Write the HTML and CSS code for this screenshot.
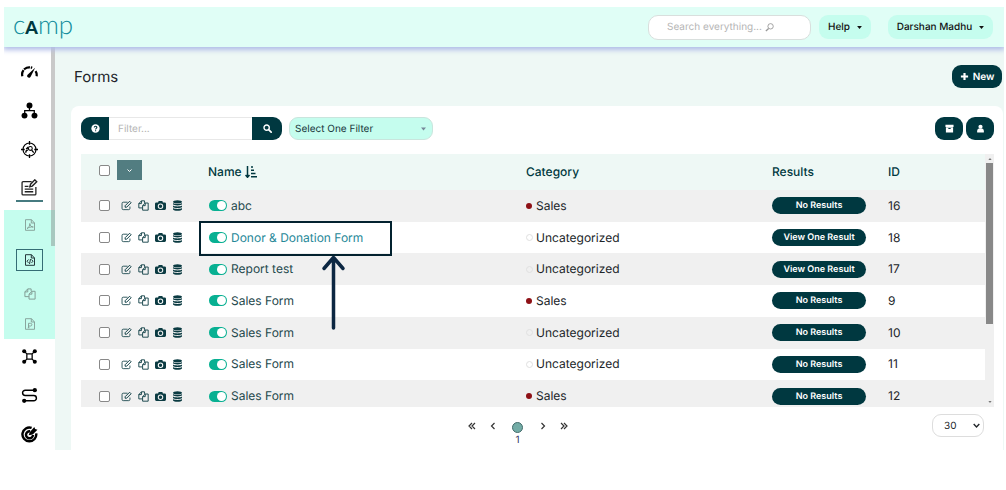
FILE: index.html
```html
<!DOCTYPE html>
<html lang="en">
<head>
<meta charset="utf-8">
<title>Forms</title>
<link rel="stylesheet" href="styles.css">
</head>
<body>
<svg class="sprite" aria-hidden="true">
  <symbol id="edit" viewBox="0 0 16 16"><path d="M13 9.500v2.700a1.800 1.800 0 0 1-1.800 1.800H3.300a1.800 1.800 0 0 1-1.800-1.800V5a1.800 1.800 0 0 1 1.800-1.800H9.500" fill="none" stroke="currentColor" stroke-width="1.200"/><path d="M6 10.500V8.300l6.500-6.500 2.200 2.200-6.500 6.500z" fill="none" stroke="currentColor" stroke-width="1.400"/></symbol>
  <symbol id="copy" viewBox="0 0 16 16"><path d="M6.500 11.500H1.200V5.200L5 1.200h4.500v3M5 1.200v4H1.200M6.700 8.200l3.800-3.800h4.300v10.400H6.700zM10.500 4.400v3.800H6.700" fill="none" stroke="currentColor" stroke-width="1.300" stroke-linejoin="round"/></symbol>
  <symbol id="camera" viewBox="0 0 16 16"><path fill-rule="evenodd" fill="currentColor" d="M2 3.500h2.500L5.300 1.500h5.400l.8 2H14a2 2 0 0 1 2 2v7a2 2 0 0 1-2 2H2a2 2 0 0 1-2-2v-7a2 2 0 0 1 2-2zM8 5a4 4 0 1 0 0 8 4 4 0 0 0 0-8zm0 1.500a2.500 2.500 0 1 1 0 5 2.500 2.500 0 0 1 0-5z"/></symbol>
  <symbol id="database" viewBox="0 0 16 16"><g fill="currentColor"><ellipse cx="8" cy="2.500" rx="6.500" ry="2.300"/><path d="M1.500 4.200c2 1.800 11 1.800 13 0v2c-1 2.200-12 2.200-13 0zM1.500 8c2 1.800 11 1.800 13 0v2c-1 2.200-12 2.200-13 0zM1.500 11.800c2 1.800 11 1.800 13 0v2c-1 2.400-12 2.400-13 0z"/></g></symbol>
  <symbol id="search" viewBox="0 0 16 16"><circle cx="6.500" cy="6.500" r="4.700" fill="none" stroke="currentColor" stroke-width="2.500"/><path d="M10 10l4.500 4.500" stroke="currentColor" stroke-width="3" stroke-linecap="round"/></symbol>
  <symbol id="caret" viewBox="0 0 8 5"><path d="M0 0h8L4 5z" fill="currentColor"/></symbol>
  <symbol id="chevron" viewBox="0 0 10 6"><path d="M1 1l4 4 4-4" fill="none" stroke="currentColor" stroke-width="2"/></symbol>
</svg>

<div class="app">
  <header class="topbar">
    <a class="logo" href="#" aria-label="camp">c<b>A</b>mp</a>
    <div class="topbar-tools">
      <label class="search">
        <input type="text" placeholder="Search everything..." aria-label="Search everything">
        <svg viewBox="0 0 10 10"><circle cx="6.200" cy="3.700" r="3" fill="none" stroke="currentColor"/><path d="M4 6L1 9" stroke="currentColor" stroke-width="1.500"/></svg>
      </label>
      <button class="pill help">Help <svg><use href="#caret"/></svg></button>
      <button class="pill user">Darshan Madhu <svg><use href="#caret"/></svg></button>
    </div>
  </header>

  <div class="body">
    <nav class="sidebar" aria-label="Main">
      <div class="menu">
        <a class="item" href="#" aria-label="Dashboard"><svg viewBox="0 0 16 16"><path d="M1.300 12.500A6.700 6.700 0 0 1 10.500 4.600M14.700 12.500a7 7 0 0 0-1-4.800" fill="none" stroke="currentColor" stroke-width="2.100" stroke-dasharray="6 .8"/><path d="M13.300 4.500L9.300 12.500a1.800 1.800 0 1 1-2.600-2z" fill="currentColor"/></svg></a>
        <a class="item" href="#" aria-label="Contacts"><svg viewBox="0 0 16 16"><path d="M8 4v4M3.500 12V8.200h9V12" fill="none" stroke="currentColor" stroke-width="1.200"/><g fill="currentColor"><circle cx="8" cy="3.300" r="2.800"/><circle cx="3.300" cy="12.800" r="2.800"/><circle cx="12.700" cy="12.800" r="2.800"/></g></svg></a>
        <a class="item" href="#" aria-label="Audience"><svg viewBox="0 0 16 16"><circle cx="8" cy="8" r="6.100" fill="none" stroke="currentColor" stroke-width="1.100"/><path d="M8 0v3.500M8 12.500V16M0 8h3.500M12.500 8H16M4.500 11c0-2 1-2.500 2-2.500M10 8.500l2 2.500M4.800 7.500l1.500-1.300L7 8" fill="none" stroke="currentColor" stroke-width="1.200"/><circle cx="8.800" cy="7" r="1.800" fill="none" stroke="currentColor"/></svg></a>
        <a class="item current" href="#" aria-label="Content"><svg viewBox="0 0 16 16"><path d="M10 2.500H2a1 1 0 0 0-1 1V14a1 1 0 0 0 1 1h11a1 1 0 0 0 1-1V7.500M3.500 7H7M3.500 9.500h8M3.500 12h8" fill="none" stroke="currentColor" stroke-width="1.200"/><path d="M8.300 7.300l.7-2.400L13 .8l1.800 1.800-4.200 4.100z" fill="none" stroke="currentColor" stroke-width="1.300"/></svg></a>
      </div>
      <div class="submenu">
        <a class="sub" href="#" aria-label="PDF"><svg viewBox="0 0 12 12"><path d="M1.500.7h6L10.500 4v7.300h-9zM7.300.7V4h3.200M3 9.500c2-1 2.800-3 2.800-5 .5 2.500 1.500 3.500 3.500 3.500-2.500-.2-4.500.3-6.300 1.500z" fill="none" stroke="currentColor" stroke-width=".9"/></svg></a>
        <a class="sub chosen" href="#" aria-label="Forms"><svg viewBox="0 0 12 12"><path d="M1.500.7h6L10.500 4v7.300h-9zM7.300.7V4h3.200M4.500 5.500L3 7.200l1.500 1.700M7.500 5.500L9 7.200 7.500 8.900M6.500 5l-1 5" fill="none" stroke="currentColor"/></svg></a>
        <a class="sub" href="#" aria-label="Pages"><svg><use href="#copy"/></svg></a>
        <a class="sub" href="#" aria-label="Presentations"><svg viewBox="0 0 12 12"><path d="M1.500.7h6L10.500 4v7.300h-9zM7.300.7V4h3.200M4.500 9.800V5.300h2a1.300 1.300 0 0 1 0 2.700h-2M3.800 9.800h1.700" fill="none" stroke="currentColor" stroke-width=".9"/></svg></a>
      </div>
      <div class="menu lower">
        <a class="item" href="#" aria-label="Integrations"><svg viewBox="0 0 16 16"><path d="M3 3l3 3M13 3l-3 3M3 13l3-3M13 13l-3-3M5.500 5.500h5v5h-5z" fill="none" stroke="currentColor" stroke-width="1.200"/><g fill="currentColor"><circle cx="3" cy="3" r="1.900"/><circle cx="13" cy="3" r="1.900"/><circle cx="3" cy="13" r="1.900"/><circle cx="13" cy="13" r="1.900"/></g></svg></a>
        <a class="item" href="#" aria-label="Journeys"><svg viewBox="0 0 16 16"><path d="M13 3H4a2.500 2.500 0 0 0 0 5h8a2.500 2.500 0 0 1 0 5H3" fill="none" stroke="currentColor" stroke-width="1.400"/><circle cx="13" cy="3" r="2" fill="currentColor"/><circle cx="3" cy="13" r="2" fill="currentColor"/></svg></a>
        <a class="item" href="#" aria-label="Goals"><svg viewBox="0 0 16 16"><path d="M10 1.800A6.500 6.500 0 1 0 14.300 7M8.500 5A3.300 3.300 0 1 0 11.300 8.500" fill="none" stroke="currentColor" stroke-width="2.300"/><path d="M7.200 8.800l1-3L12.500 1l.8 1.800 2.200.7L11 8z" fill="currentColor"/></svg></a>
      </div>
      <span class="side-scroll"></span>
    </nav>

    <main class="main">
      <div class="heading">
        <h1>Forms</h1>
        <button class="dark new"><svg viewBox="0 0 10 10"><path d="M5 1v8M1 5h8" stroke="currentColor" stroke-width="2.400"/></svg>New</button>
      </div>

      <section class="card">
        <div class="toolbar">
          <div class="filter">
            <button class="dark left" aria-label="Filter help"><svg viewBox="0 0 10 10"><circle cx="5" cy="5" r="4.600" fill="currentColor"/><path d="M3.600 3.800c.1-1.900 3-1.700 2.900 0C6.400 4.900 5.100 4.800 5.100 6M5.100 6.900v1.200" fill="none" stroke="#003840" stroke-width="1.200"/></svg></button>
            <input type="text" placeholder="Filter..." aria-label="Filter">
            <button class="dark right" aria-label="Search"><svg><use href="#search"/></svg></button>
          </div>
          <div class="picker">
            <select aria-label="Saved filter"><option>Select One Filter</option></select>
            <svg><use href="#caret"/></svg>
          </div>
          <div class="tool-right">
            <button class="dark" aria-label="Archive"><svg viewBox="0 0 10 10"><path fill-rule="evenodd" fill="currentColor" d="M.5.800h9v2.400h-9zM1 3.700h8v5.800H1zM3.700 4.500v1h2.600v-1z"/></svg></button>
            <button class="dark" aria-label="Owner"><svg viewBox="0 0 10 10"><g fill="currentColor"><circle cx="5" cy="3" r="2.300"/><path d="M1.300 9.500V8c0-2 1-3 2.200-3h3c1.200 0 2.200 1 2.200 3v1.500z"/></g></svg></button>
          </div>
        </div>

        <div class="table-box">
          <div class="table-view">
            <table>
              <colgroup><col class="c-actions"><col><col class="c-category"><col class="c-results"><col class="c-id"></colgroup>
              <thead>
                <tr>
                  <th><div class="actions"><input type="checkbox" aria-label="Select all"><button class="bulk" aria-label="Bulk actions"><svg><use href="#chevron"/></svg></button></div></th>
                  <th>Name <svg class="sort" viewBox="0 0 12 12"><path d="M2.500 0v11M.5 9l2 2.300L4.500 9M6 1h2M6 4.200h3M6 7.500h4.500M6 10.800h6" fill="none" stroke="currentColor" stroke-width="1.500"/></svg></th>
                  <th>Category</th><th>Results</th><th>ID</th>
                </tr>
              </thead>
              <tbody id="rows"></tbody>
            </table>
            <svg class="callout" viewBox="0 0 193 110" aria-hidden="true"><path d="M1 1h191v33H1z" fill="none" stroke="#03222f" stroke-width="2"/><path d="M134.500 37v70M125 47.500l9.500-11 9.500 11" fill="none" stroke="#0c2742" stroke-width="3.500" stroke-linecap="round" stroke-linejoin="round"/></svg>
          </div>
          <div class="scrollbar"><svg><use href="#caret"/></svg><span></span><svg><use href="#caret"/></svg></div>
        </div>

        <div class="footer">
          <nav class="pager" aria-label="Pages">
            <a href="#" aria-label="First"><svg viewBox="0 0 8 8"><path d="M4 1L1 4l3 3M7 1L4 4l3 3" /></svg></a>
            <a href="#" aria-label="Previous"><svg viewBox="0 0 8 8"><path d="M5.500 1l-3 3 3 3"/></svg></a>
            <a class="page" href="#"><i></i>1</a>
            <a href="#" aria-label="Next"><svg viewBox="0 0 8 8"><path d="M2.500 1l3 3-3 3"/></svg></a>
            <a href="#" aria-label="Last"><svg viewBox="0 0 8 8"><path d="M1 1l3 3-3 3M4 1l3 3-3 3"/></svg></a>
          </nav>
          <div class="size">
            <select aria-label="Rows per page"><option>30</option></select>
            <svg><use href="#chevron"/></svg>
          </div>
        </div>
      </section>
    </main>
  </div>
</div>
<script src="rows.js"></script>
</body>
</html>
```
FILE: styles.css
```css
* { box-sizing: border-box; }
body { margin: 7px 2px 0 4px; background: #fff; color: #212529; font: 12px/16px Inter, "Liberation Sans", sans-serif; text-rendering: geometricPrecision; }
button, input, select { font: inherit; color: inherit; margin: 0; text-rendering: inherit; }
button { border: 0; padding: 0; cursor: pointer; }
a { color: inherit; text-decoration: none; }
svg { display: block; flex: none; }
.sprite { position: absolute; width: 0; height: 0; }

.topbar { position: relative; z-index: 1; display: flex; align-items: center; justify-content: space-between; height: 40px; padding: 0 11px 0 9px; background: #e0fef6; box-shadow: 0 2px 5px 1px #b1bee8; clip-path: inset(0 0 -10px 0); }
.logo { font: 300 26px/28px Lato, sans-serif; color: #118c9c; padding-bottom: 4px; }
.logo b { font-size: 18px; font-weight: 900; color: #003840; }
.topbar-tools { display: flex; align-items: center; }
.search { display: flex; align-items: center; width: 163px; height: 25px; padding-left: 18px; border: 1px solid #d9dfdd; border-radius: 10px; background: #fff; margin-right: 8px; color: #999; }
.search input { width: 98px; padding: 0; border: 0; outline: 0; background: none; font-size: 10px; }
.search svg { width: 9px; height: 9px; }
::placeholder { color: #b5b5b5; opacity: 1; }
.pill { display: flex; align-items: center; justify-content: center; gap: 7px; height: 24px; border-radius: 9px; background: #c5fdee; color: #111; font-size: 10px; font-weight: 500; }
.pill svg { width: 5px; height: 3px; }
.help { width: 52px; margin-right: 17px; }
.user { width: 105px; }

.body { display: flex; }
.sidebar { position: relative; flex: none; width: 51px; padding-top: 5px; }
.menu { display: flex; flex-direction: column; align-items: center; }
.item { display: flex; align-items: center; justify-content: center; width: 27px; height: 39px; color: #000; }
.item svg { width: 17px; height: 17px; }
.item.current { height: 28px; margin: 5px 0 8px; border-bottom: 2px solid #467b80; color: #222; }
.lower { gap: 22px; padding-top: 9px; }
.lower .item { height: 17px; }
.submenu { display: flex; flex-direction: column; align-items: center; gap: 8px; height: 129px; padding-top: 4px; background: #c5fdee; color: #829c94; }
.sub { display: flex; align-items: center; justify-content: center; width: 27px; height: 22px; }
.sub svg { width: 12px; height: 12px; }
.sub:nth-child(2) { margin: 5px 0 4px; }
.chosen { border: 1px solid #356d75; color: #24383b; }
.side-scroll { position: absolute; top: 0; right: 0; width: 4px; height: 199px; background: rgba(130, 130, 130, .43); }

.main { flex: 1; min-width: 0; padding: 18px 1px 0 16px; background: #eef8f5; }
.heading { display: flex; align-items: center; justify-content: space-between; padding: 0 1px 0 3px; margin-bottom: 18px; }
h1 { margin: 0; font-size: 15px; line-height: 20px; font-weight: 400; }
.dark { display: flex; align-items: center; justify-content: center; background: #003840; color: #fff; height: 23px; border-radius: 9px; }
.dark svg { width: 9px; height: 9px; }
.new { width: 50px; gap: 4px; font-size: 10px; font-weight: 600; }

.card { padding: 11px 9px 3px 10px; background: #fff; border-radius: 8px 8px 0 0; }
.toolbar { display: flex; align-items: center; margin-bottom: 14px; }
.filter { display: flex; width: 201px; margin-right: 7px; }
.filter input { flex: 1; min-width: 0; height: 23px; padding: 0 9px; border: 1px solid #e8e8e8; border-width: 1px 0; font-size: 10px; outline: 0; }
.left { width: 28px; border-radius: 9px 0 0 9px; }
.right { width: 30px; border-radius: 0 9px 9px 0; }
.picker, .size { position: relative; }
.picker svg { position: absolute; right: 7px; top: 10px; width: 5px; height: 4px; color: #789; }
select { appearance: none; outline: 0; }
.picker select { display: block; width: 144px; height: 23px; padding: 0 5px; border: 1px solid #c9e5dd; border-radius: 9px; background: #c5fdee; font-size: 10px; color: #17373b; }
.tool-right { display: flex; gap: 3px; margin-left: auto; }
.tool-right .dark { width: 28px; }

.table-box { display: flex; height: 253px; overflow: hidden; }
.table-view { position: relative; flex: 1; }
table { width: 100%; height: 258px; table-layout: fixed; border-collapse: collapse; }
.c-actions { width: 127px; }
.c-category { width: 246px; }
.c-results { width: 116px; }
.c-id { width: 97px; }
thead tr { height: 36px; background: #eef8f5; }
th, td { padding: 0; text-align: left; font-size: 12px; }
th { font-weight: 500; color: #003840; }
tbody tr:nth-child(odd) { background: #f0f0f0; }
.sort { display: inline-block; width: 12px; height: 12px; vertical-align: -2px; }
.actions { display: flex; align-items: center; gap: 6px; padding-left: 18px; color: #0b3b42; }
.actions svg { width: 11px; height: 11px; }
input[type="checkbox"] { appearance: none; flex: none; width: 11px; height: 11px; margin-right: 5px; border: 1px solid #888; border-radius: 2px; background: #fff; }
thead input[type="checkbox"] { margin-right: 1px; }
thead .actions { padding-bottom: 4px; }
.bulk { display: flex; align-items: center; justify-content: center; width: 25px; height: 20px; background: #527d81; color: #fff; }
.bulk svg { width: 5px; height: 3px; }
.name { display: flex; align-items: center; gap: 4px; color: #24484c; }
.name.link { color: #258797; }
.name .switch { width: 18px; height: 11px; margin: 0 0 0 1px; padding: 1px; border: 0; border-radius: 6px; background: #08b092; }
.switch::before { content: ""; display: block; width: 9px; height: 9px; margin-left: auto; border-radius: 50%; background: #fff; }
.category { display: flex; align-items: center; gap: 3px; }
.category i { width: 7px; height: 7px; border: 1px solid #e0e0e0; border-radius: 50%; }
.category.sales i { border: 0; width: 6px; height: 6px; margin-right: 1px; background: #8e1116; }
.result { width: 94px; height: 17px; border-radius: 9px; background: #003840; color: #fff; font-size: 9px; line-height: 17px; font-weight: 600; display: block; }
.callout { position: absolute; left: 118px; top: 67px; width: 193px; height: 110px; }
.scrollbar { display: flex; flex-direction: column; align-items: center; width: 9px; padding: 4px 0; background: #f0f0f0; color: #777; }
.scrollbar svg { width: 4px; height: 2px; }
.scrollbar svg:first-child { transform: rotate(180deg); }
.scrollbar span { width: 7px; height: 161px; margin: 3px 0 auto; background: #888; }

.footer { display: flex; align-items: flex-start; padding: 7px 10px 0 0; }
.pager { flex: 1; display: flex; justify-content: center; gap: 13px; padding: 8px 0 0 22px; color: #333; }
.pager svg { width: 8px; height: 8px; fill: none; stroke: currentColor; stroke-width: 1.200; }
.page { display: flex; flex-direction: column; align-items: center; width: 12px; font-size: 10px; line-height: 14px; color: #35355f; }
.pager a:nth-child(2) { margin-right: 2px; }
.pager a:nth-child(4) { margin-left: 2px; }
.page i { width: 11px; height: 11px; border: 1px solid #426b6a; border-radius: 50%; background: #73aca6; }
.size select { display: block; width: 52px; height: 23px; padding: 0 11px; border: 1px solid #ddd; border-radius: 9px; background: #fff; font-size: 10px; }
.size svg { position: absolute; right: 4px; top: 9px; width: 7px; height: 5px; }
```
FILE: rows.js
```js
const forms = [
  ["abc", "Sales", "No Results", 16],
  ["Donor & Donation Form", "Uncategorized", "View One Result", 18],
  ["Report test", "Uncategorized", "View One Result", 17],
  ["Sales Form", "Sales", "No Results", 9],
  ["Sales Form", "Uncategorized", "No Results", 10],
  ["Sales Form", "Uncategorized", "No Results", 11],
  ["Sales Form", "Sales", "No Results", 12]
];
const icons = ["edit", "copy", "camera", "database"];
document.getElementById("rows").innerHTML = forms.map(([name, category, result, id]) => `
  <tr>
    <td><div class="actions"><input type="checkbox" aria-label="Select form ${id}">${icons.map(i => `<a href="#" aria-label="${i}"><svg><use href="#${i}"/></svg></a>`).join("")}</div></td>
    <td><div class="name${id === 18 ? " link" : ""}"><input type="checkbox" class="switch" role="switch" checked aria-label="Form ${id} active"><a href="#">${name.replace("&", "&amp;")}</a></div></td>
    <td><div class="category${category === "Sales" ? " sales" : ""}"><i></i>${category}</div></td>
    <td><button class="result">${result}</button></td>
    <td>${id}</td>
  </tr>`).join("");
```
